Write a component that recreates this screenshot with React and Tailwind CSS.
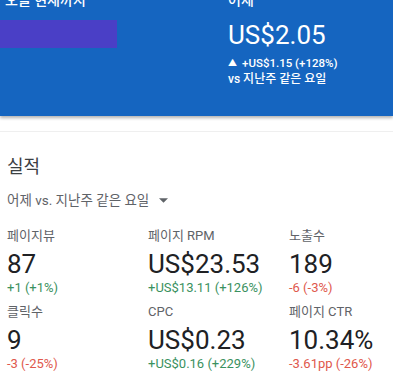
import { useState } from 'react';

const metrics = [
  { label: '페이지뷰', value: '87', change: '+1 (+1%)', up: true },
  { label: '페이지 RPM', value: 'US$23.53', change: '+US$13.11 (+126%)', up: true },
  { label: '노출수', value: '189', change: '-6 (-3%)', up: false },
  { label: '클릭수', value: '9', change: '-3 (-25%)', up: false },
  { label: 'CPC', value: 'US$0.23', change: '+US$0.16 (+229%)', up: true },
  { label: '페이지 CTR', value: '10.34%', change: '-3.61pp (-26%)', up: false },
];

const Metric = ({ label, value, change, up }) => (
  <div className="flex flex-col">
    <p className="text-[13px] leading-[20px] text-[#5f6368] whitespace-nowrap">{label}</p>
    <p className="mt-[2px] text-[26px] leading-[32px] text-[#202124] whitespace-nowrap">{value}</p>
    <p className={`text-[13px] leading-[16px] whitespace-nowrap ${up ? 'text-[#3a9160]' : 'text-[#e0584c]'}`}>
      {change}
    </p>
  </div>
);

const App = () => {
  const [compare] = useState('어제 vs. 지난주 같은 요일');

  return (
    <div
      className="w-[393px] h-[384px] overflow-hidden bg-white"
      style={{ fontFamily: 'Roboto, "Noto Sans CJK KR", sans-serif' }}
    >
      {/* earnings header */}
      <div className="relative z-10 flex h-[116px] bg-[#1565c0] text-white shadow-[0_2px_3px_rgba(0,0,0,0.3)]">
        <div className="w-[228px]">
          <p className="-mt-[10px] pl-[5px] text-[14px] leading-[20px] font-medium">오늘 현재까지</p>
          <div className="mt-[10px] h-[28px] w-[117px] bg-[#4a3fc6]" />
        </div>
        <div className="flex-1">
          <p className="-mt-[10px] text-[14px] leading-[20px] font-medium">어제</p>
          <p className="mt-[9px] text-[26px] leading-[32px]">US$2.05</p>
          <p className="mt-[4px] flex items-center gap-[5px] text-[11.5px] leading-[16px] font-medium">
            <span className="text-[9px]">▲</span>
            <span>+US$1.15 (+128%)</span>
          </p>
          <p className="text-[12px] leading-[16px] font-medium">vs 지난주 같은 요일</p>
        </div>
      </div>

      {/* performance card */}
      <div className="mt-[15px] border-t border-[#efefef] pl-[7px]">
        <h2 className="mt-[23px] text-[18px] leading-[24px] text-[#3c4043]">실적</h2>
        <button className="mt-[11px] flex items-center gap-[10px] text-[13.5px] leading-[20px] text-[#5f6368]">
          {compare}
          <svg width="9" height="5" viewBox="0 0 10 5">
            <path d="M0 0h10L5 5z" fill="#5f6368" />
          </svg>
        </button>
        <div className="mt-[16px] grid grid-cols-[141px_141px_1fr] gap-y-[6px]">
          {metrics.map((m) => (
            <Metric key={m.label} {...m} />
          ))}
        </div>
      </div>
    </div>
  );
};

export default App;
